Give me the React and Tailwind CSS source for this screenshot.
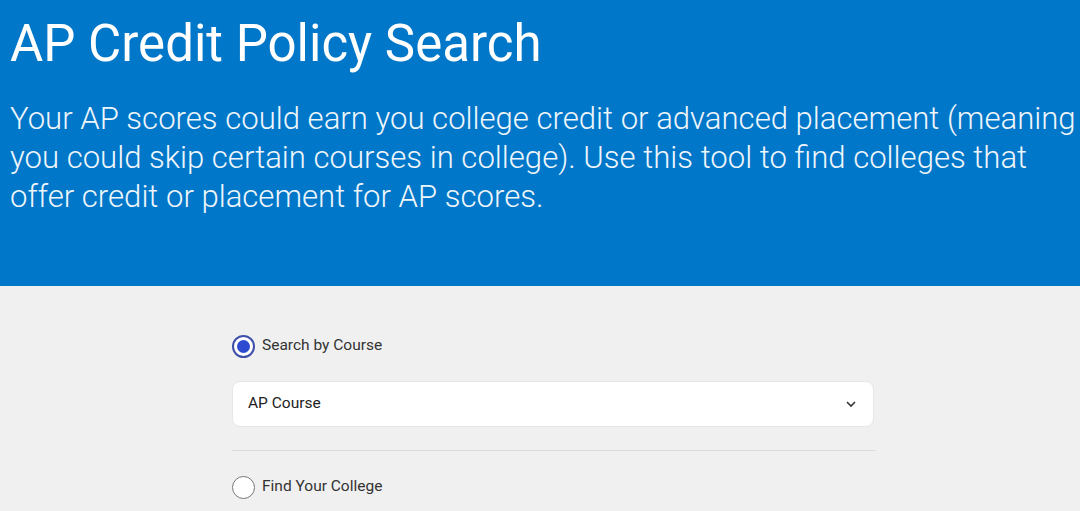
export default function App() {
  return (
    <div className="w-[1080px] h-[511px] overflow-hidden bg-[#f0f0f0]" style={{ fontFamily: 'Roboto, "Liberation Sans", sans-serif' }}>
      <header className="h-[286px] bg-[#0077c8] pl-[10px] pt-[12px] overflow-hidden">
        <h1 className="text-[51px] leading-[64px] text-white font-normal">AP Credit Policy Search</h1>
        <p className="mt-[23px] text-[31.1px] leading-[39px] font-light text-[#eef5fb] whitespace-nowrap">
          Your AP scores could earn you college credit or advanced placement (meaning
          <br />
          you could skip certain courses in college). Use this tool to find colleges that
          <br />
          offer credit or placement for AP scores.
        </p>
      </header>
      <main className="pl-[232px] pt-[48px]">
        <div className="w-[644px]">
          <label className="flex items-center gap-[7px] h-[24px]">
            <span className="w-[23px] h-[23px] rounded-full border-2 border-[#3d4fa8] bg-white flex items-center justify-center">
              <span className="w-[13px] h-[13px] rounded-full bg-[#2d4ad1]" />
            </span>
            <span className="text-[15.5px] text-[#333]">Search by Course</span>
          </label>
          <div className="mt-[23px] w-[642px] h-[46px] bg-white rounded-[8px] border border-[#e6e6e6] flex items-center justify-between pl-[15px] pr-[16px]">
            <span className="text-[15.5px] text-[#222]">AP Course</span>
            <svg width="12" height="8" viewBox="0 0 12 8" fill="none" stroke="#333" strokeWidth="1.6">
              <path d="M2 2l4 4 4-4" />
            </svg>
          </div>
          <div className="mt-[23px] h-px bg-[#dcdcdc]" />
          <label className="mt-[24px] flex items-center gap-[7px] h-[24px]">
            <span className="w-[23px] h-[23px] rounded-full border-[1.5px] border-[#777] bg-white" />
            <span className="text-[15.5px] text-[#333]">Find Your College</span>
          </label>
        </div>
      </main>
    </div>
  );
}
